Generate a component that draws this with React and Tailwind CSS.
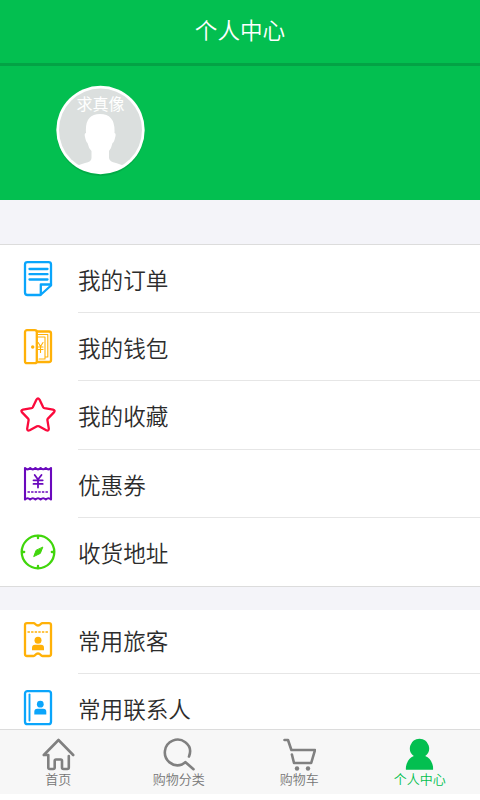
const FONT = "font-['Noto_Sans_CJK_SC','Noto_Sans',sans-serif]";

function RowIcon({ children, color }) {
  return (
    <svg
      viewBox="0 0 36 36"
      className="ml-5 size-9 shrink-0"
      fill="none"
      stroke={color}
      strokeWidth="2.300"
      strokeLinecap="round"
      strokeLinejoin="round"
    >
      {children}
    </svg>
  );
}

function OrderIcon() {
  return (
    <RowIcon color="#0aa5fb">
      <path d="M20.500 34H7.500Q5 34 5 31.500V3.500Q5 1.200 7.500 1.200H28.500Q31 1.200 31 3.500V24.500Z" />
      <path d="M20.800 33.500V23.500H31" />
      <path d="M9.500 8H27.500M9.500 13.200H27.500M9.500 18.500H27.500" />
    </RowIcon>
  );
}

function WalletIcon() {
  return (
    <RowIcon color="#ffb108">
      <rect x="5" y="1.200" width="11.800" height="33" rx="2" />
      <path d="M17 2.500H29Q31 2.500 31 4.500V31Q31 33 29 33H17" />
      <path d="M17 5.500H27.800V28H25.500M17 8H25V30H19" strokeWidth="1.100" />
      <path d="M18.200 13.500L20.500 17.500L23 13.500M20.500 17.500V23.500M18.200 18H23M18.200 20.500H23" strokeWidth="1.100" />
      <circle cx="12.700" cy="18" r="1.700" fill="#ffb108" stroke="none" />
    </RowIcon>
  );
}

function StarIcon() {
  return (
    <RowIcon color="#fb0a3c">
      <path d="M16.500 2.600Q18 .2 19.500 2.600L23.200 10.300Q23.600 11 24.500 11.200L33 12.600Q35.600 13.400 33.900 15.400L27.900 21.600Q27.300 22.200 27.400 23.100L28.800 31.600Q28.900 34.300 26.300 33.300L19 29.300Q18 28.800 17 29.300L9.700 33.300Q7.100 34.300 7.200 31.600L8.600 23.100Q8.700 22.200 8.100 21.600L2.100 15.400Q.4 13.400 3 12.600L11.500 11.200Q12.400 11 12.800 10.300Z" />
    </RowIcon>
  );
}

function CouponIcon() {
  return (
    <RowIcon color="#6a09bd">
      <path
        d="M5 33.500V2Q7.600 4.600 10.200 2Q12.800 4.600 15.400 2Q18 4.600 20.600 2Q23.200 4.600 25.800 2Q28.400 4.600 31 2V33.500Q28.400 31 25.800 33.500Q23.200 31 20.600 33.500Q18 31 15.400 33.500Q12.800 31 10.200 33.500Q7.600 31 5 33.500Z"
        strokeWidth="2.100"
      />
      <path d="M14.700 9L18 13.500L21.500 9M18 13.500V21.500M13.500 14.300H22.700M13.500 17.900H22.700" strokeWidth="1.800" />
      <path d="M7.500 26H29" strokeWidth="1.300" strokeDasharray="2.400 1.200" strokeLinecap="butt" />
    </RowIcon>
  );
}

function CompassIcon() {
  return (
    <RowIcon color="#41d60c">
      <circle cx="18" cy="18" r="16.300" />
      <path d="M18 2V4.200M18 31.800V34M2 18H4.200M31.800 18H34" />
      <path d="M22.700 13.400L20.300 19.400L13.700 22.600L16 16.600Z" fill="#41d60c" strokeWidth="1" />
    </RowIcon>
  );
}

function TicketIcon() {
  return (
    <RowIcon color="#ffb108">
      <path d="M7 1.200H13.500Q14.500 1.200 15.200 2Q18 5 20.800 2Q21.500 1.200 22.500 1.200H29Q31 1.200 31 3V32Q31 34 29 34H22.500Q21.500 34 20.800 33Q18 30 15.200 33Q14.500 34 13.500 34H7Q5 34 5 32V3Q5 1.200 7 1.200Z" />
      <path d="M7.500 10H29" strokeWidth="1.300" strokeDasharray="2.400 1.200" strokeLinecap="butt" />
      <circle cx="18" cy="18.200" r="3.500" fill="#ffb108" stroke="none" />
      <path d="M12 28.300V25.800Q12 22.800 15 22.800H21Q24 22.800 24 25.800V28.300Z" fill="#ffb108" stroke="none" />
    </RowIcon>
  );
}

function ContactIcon() {
  return (
    <RowIcon color="#0aa5fb">
      <rect x="5" y="1.200" width="26" height="33" rx="2.500" />
      <path d="M9.500 4.500V30.500" strokeWidth="1.900" />
      <circle cx="20.300" cy="14.200" r="3.400" fill="#0aa5fb" stroke="none" />
      <path d="M14.300 24.500V21.800Q14.300 18.800 17.300 18.800H23.300Q26.300 18.800 26.300 21.800V24.500Z" fill="#0aa5fb" stroke="none" />
    </RowIcon>
  );
}

function Row({ icon: Icon, label, last }) {
  return (
    <div className="flex h-[68.2px] shrink-0 items-center">
      <Icon />
      <div
        className={
          'ml-[22px] flex h-full flex-1 items-center border-b pt-[2.6px] text-[22.6px] font-[350] text-[#2c2c2c] ' +
          (last ? 'border-transparent' : 'border-[#e6e6e6]')
        }
      >
        {label}
      </div>
    </div>
  );
}

function Avatar() {
  return (
    <svg viewBox="0 0 90 94" className="ml-[55px] mt-[18px] h-[94px] w-[90px]">
      <defs>
        <clipPath id="face">
          <circle cx="45.500" cy="46" r="42" />
        </clipPath>
      </defs>
      <circle cx="45.500" cy="48" r="44" fill="#00983b" opacity=".5" />
      <circle cx="45.500" cy="46" r="44.200" fill="#fff" />
      <circle cx="45.500" cy="46" r="41.500" fill="#dbdfde" />
      <text x="45.500" y="26" textAnchor="middle" fontSize="16" fill="#fff">
        求真像
      </text>
      <path
        clipPath="url(#face)"
        fill="#fff"
        d="M31 49Q29.500 30 45 30Q60.500 30 59.500 49Q61.500 49 60 54Q59 58.500 57.500 59Q56.500 64 54 67V74Q54.500 78 61 79Q69 81 73 85V92H17V85Q22 81 30 79Q36.500 78 36.500 74V67Q33.500 64 32.500 59Q31 58 30 53Q29 49 31 49Z"
      />
    </svg>
  );
}

function HomeIcon() {
  return (
    <path d="M1.800 17L16.500 2L31.200 17M1.800 17H6.300V29.500Q6.300 31 7.800 31H11.200Q12.700 31 12.700 29.500V22.800Q12.700 21.500 14 21.500H18.800Q20 21.500 20 22.800V29.500Q20 31 21.500 31H25.300Q26.800 31 26.800 29.500V18" />
  );
}

function SearchIcon() {
  return <path d="M27 18.500Q30.500 9.500 23.300 4.200A12.800 12.800 0 1 0 20 26.500L23.500 24.200L31.500 31.200" />;
}

function CartIcon() {
  return (
    <>
      <path d="M1.500 2H5L8.400 12H32L28.200 25H11L8.900 16.500" />
      <circle cx="14" cy="30.500" r="2.200" fill="#808080" stroke="none" />
      <circle cx="25" cy="30.500" r="2.200" fill="#808080" stroke="none" />
    </>
  );
}

function UserIcon() {
  return (
    <path
      d="M16.500 .7A9.600 9.600 0 0 1 22.200 18Q28.500 20.500 30 28.500Q30.200 31.800 30 31.800H3Q2.700 31.800 3 28.500Q4.500 20.500 10.800 18A9.600 9.600 0 0 1 16.500 .7Z"
      fill="#03bf50"
      stroke="none"
    />
  );
}

const account = [
  { label: '我的订单', icon: OrderIcon },
  { label: '我的钱包', icon: WalletIcon },
  { label: '我的收藏', icon: StarIcon },
  { label: '优惠券', icon: CouponIcon },
  { label: '收货地址', icon: CompassIcon },
];

const people = [
  { label: '常用旅客', icon: TicketIcon },
  { label: '常用联系人', icon: ContactIcon },
];

const tabs = [
  { label: '首页', icon: HomeIcon },
  { label: '购物分类', icon: SearchIcon },
  { label: '购物车', icon: CartIcon },
  { label: '个人中心', icon: UserIcon, active: true },
];

export default function App() {
  return (
    <div className={`${FONT} flex h-[800px] w-[480px] flex-col overflow-hidden bg-white`}>
      <header className="flex h-[66px] shrink-0 items-center justify-center border-b-[3px] border-[#03a345] bg-[#03bf50] pb-[4px] text-[22.6px] font-[350] text-white">
        个人中心
      </header>

      <section className="h-[134px] shrink-0 bg-[#03bf50]">
        <Avatar />
      </section>

      <main className="flex min-h-0 flex-1 flex-col overflow-hidden bg-[#f4f4f9]">
        <div className="mt-11 shrink-0 border-y border-[#dcdcdc] bg-white">
          {account.map((item, i) => (
            <Row key={item.label} {...item} last={i === account.length - 1} />
          ))}
        </div>
        {/* the first row here is a little tighter at the top */}
        <div className="mt-[23px] shrink-0 overflow-hidden bg-white">
          <div className="-mt-1">
            {people.map(item => (
              <Row key={item.label} {...item} />
            ))}
          </div>
        </div>
      </main>

      {/* bottom tab bar */}
      <nav className="mb-1.5 flex h-[65px] shrink-0 border-t border-[#dcdcdc] bg-[#f7f7f7]">
        {tabs.map(({ label, icon: Icon, active }) => (
          <div
            key={label}
            className={
              'flex flex-1 flex-col items-center pt-2 text-[13px] font-[350] leading-[16px] first:-ml-0.5 ' +
              (active ? 'text-[#03bf50]' : 'text-[#757575]')
            }
          >
            <svg
              viewBox="0 0 33 33"
              className="size-[33px]"
              fill="none"
              stroke="#808080"
              strokeWidth="2.600"
              strokeLinecap="round"
              strokeLinejoin="round"
            >
              <Icon />
            </svg>
            {label}
          </div>
        ))}
      </nav>
    </div>
  );
}
